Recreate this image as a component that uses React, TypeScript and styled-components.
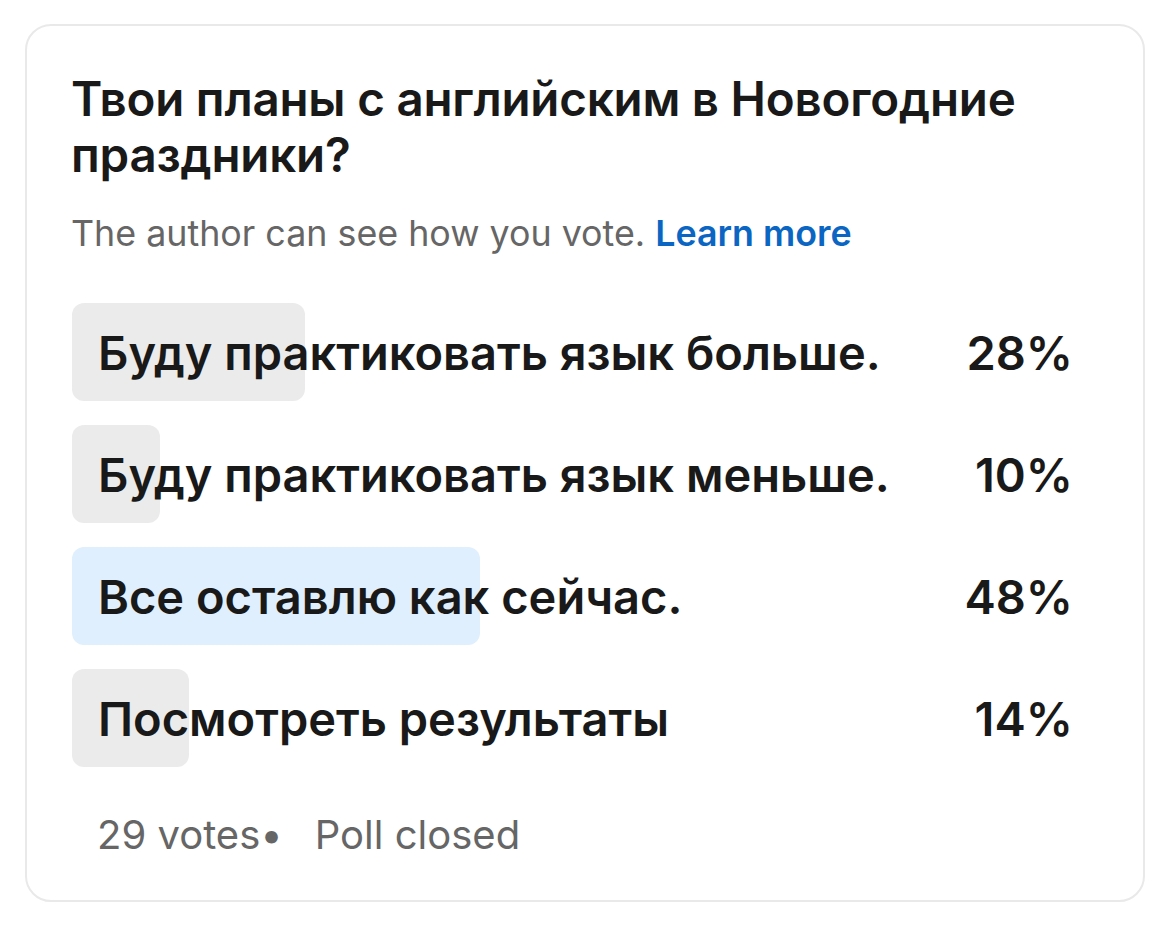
import React from "react";
import styled, { createGlobalStyle } from "styled-components";

const Global = createGlobalStyle`
  html, body { margin: 0; padding: 0; background: #ffffff; }
  body { font-family: Inter, "Noto Sans", "Liberation Sans", sans-serif; -webkit-font-smoothing: antialiased; }
`;

const Page = styled.div`
  padding: 24px 25px;
`;

const Card = styled.section`
  width: 1120px;
  box-sizing: border-box;
  border: 2px solid #e9e9e9;
  border-radius: 26px;
  padding: 45px 70px 41px 45px;
  background: #fff;
`;

const Title = styled.h1`
  margin: 0 0 0 -1px;
  font-size: 47.5px;
  line-height: 56px;
  font-weight: 600;
  color: #191919;
  letter-spacing: -0.2px;
`;

const Note = styled.p`
  margin: 30px 0 0 -1px;
  font-size: 35.8px;
  line-height: 40px;
  color: #666666;
  font-weight: 400;
`;

const Learn = styled.a`
  color: #0a66c2;
  font-weight: 600;
  text-decoration: none;
`;

const Options = styled.div`
  margin-top: 50px;
  display: flex;
  flex-direction: column;
  gap: 24px;
`;

const Row = styled.div`
  display: grid;
  grid-template-columns: 840px 1fr;
  align-items: center;
  height: 98px;
`;

const Track = styled.div`
  position: relative;
  height: 100%;
  display: flex;
  align-items: center;
`;

const Fill = styled.div<{ $mine?: boolean }>`
  position: absolute;
  left: 0;
  top: 0;
  bottom: 0;
  border-radius: 12px;
  background: ${(p) => (p.$mine ? "#e0effd" : "#ebebeb")};
`;

const Label = styled.span`
  position: relative;
  padding-left: 26px;
  font-size: 47px;
  font-weight: 600;
  color: #191919;
  white-space: nowrap;
`;

const Pct = styled.span`
  text-align: right;
  font-size: 47px;
  font-weight: 600;
  color: #191919;
`;

const Footer = styled.div`
  margin-top: 44px;
  padding-left: 25px;
  font-size: 40px;
  line-height: 48px;
  color: #666666;
  display: flex;
  align-items: center;
  gap: 32px;
`;

const options = [
  { label: "Буду практиковать язык больше.", pct: 28, w: 233 },
  { label: "Буду практиковать язык меньше.", pct: 10, w: 88 },
  { label: "Все оставлю как сейчас.", pct: 48, w: 408, mine: true },
  { label: "Посмотреть результаты", pct: 14, w: 117 },
];

export default function App() {
  return (
    <Page>
      <Global />
      <Card>
        <Title>Твои планы с английским в Новогодние праздники?</Title>
        <Note>
          The author can see how you vote. <Learn href="#">Learn more</Learn>
        </Note>
        <Options>
          {options.map((o) => (
            <Row key={o.label}>
              <Track>
                <Fill $mine={o.mine} style={{ width: o.w }} />
                <Label>{o.label}</Label>
              </Track>
              <Pct>{o.pct}%</Pct>
            </Row>
          ))}
        </Options>
        <Footer>
          <span>29 votes•</span>
          <span>Poll closed</span>
        </Footer>
      </Card>
    </Page>
  );
}
